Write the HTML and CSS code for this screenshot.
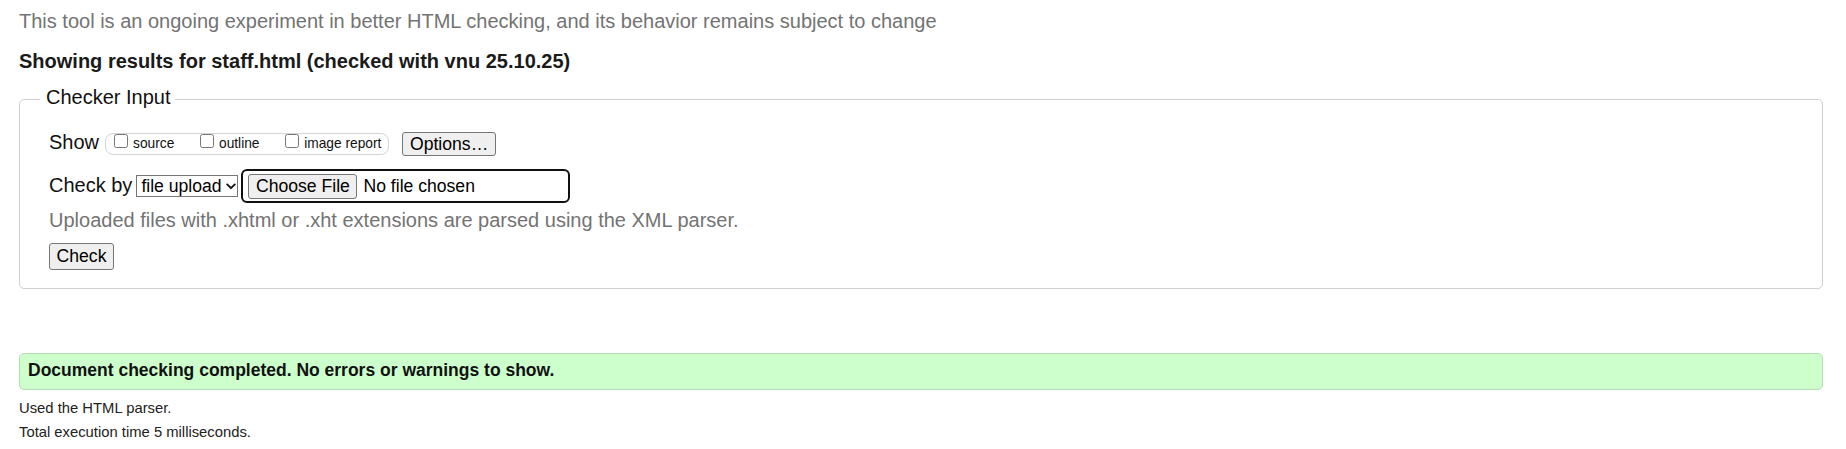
FILE: index.html
```html
<!DOCTYPE html>
<html lang="en">
<head>
<meta charset="utf-8">
<title>Nu Html Checker</title>
<link rel="stylesheet" href="styles.css">
</head>
<body>
<p class="intro">This tool is an ongoing experiment in better HTML checking, and its behavior remains subject to change</p>
<h2 class="results">Showing results for staff.html (checked with vnu 25.10.25)</h2>
<form class="checker">
  <fieldset class="input-box">
    <legend class="legend">Checker Input</legend>
    <div class="rows">
      <div class="row row-show">
        <span class="row-label">Show</span>
        <span class="show-options">
          <label class="opt"><input type="checkbox" class="cb"><span>source</span></label>
          <label class="opt"><input type="checkbox" class="cb"><span>outline</span></label>
          <label class="opt"><input type="checkbox" class="cb"><span>image report</span></label>
        </span>
        <button type="button" class="btn btn-options">Options…</button>
      </div>
      <div class="row row-checkby">
        <span class="row-label label-checkby">Check by</span>
        <span class="select" role="combobox" aria-label="Check by"><span class="select-text">file upload</span><svg class="chev" width="10" height="7" viewBox="0 0 10 7" aria-hidden="true"><path d="M1.2 1.4 L5 5.2 L8.8 1.4" fill="none" stroke="#111" stroke-width="1.9" stroke-linecap="round" stroke-linejoin="round"/></svg></span>
        <span class="file-wrap"><button type="button" class="btn btn-file">Choose File</button><span class="file-name">No file chosen</span></span>
      </div>
      <p class="hint">Uploaded files with .xhtml or .xht extensions are parsed using the XML parser.</p>
      <button type="button" class="btn btn-check">Check</button>
    </div>
  </fieldset>
</form>
<p class="success">Document checking completed. No errors or warnings to show.</p>
<p class="meta meta-first">Used the HTML parser.</p>
<p class="meta meta-second">Total execution time 5 milliseconds.</p>
</body>
</html>
```
FILE: styles.css
```css
* { box-sizing: border-box; }
html, body { margin: 0; background: #fff; }
body {
  font-family: "Liberation Sans", Arial, sans-serif;
  font-size: 17.6px;
  color: #000;
  padding: 0 23px 0 19px;
}
.intro {
  margin: 10px 0 0;
  font-size: 20px;
  line-height: normal;
  color: #737373;
}
.results {
  margin: 16.6px 0 0;
  font-size: 20px;
  line-height: normal;
  font-weight: bold;
  color: #1a1a1a;
}
.checker { margin: 13.9px 0 0; }
.input-box {
  margin: 0;
  padding: 0 20px 18.7px;
  border: 1px solid #cfcfcf;
  border-radius: 5px;
  min-width: 0;
}
.legend {
  padding: 0 4px 3px 6px;
  font-size: 20px;
  line-height: normal;
  color: #111;
}
.rows { margin-left: 9px; padding-top: 19.5px; }
.row { display: flex; align-items: flex-start; }
.row-label {
  font-size: 20px;
  line-height: normal;
  color: #111;
}
.row-show .row-label { margin-top: -1.4px; }
.show-options {
  display: flex;
  align-items: center;
  height: 22px;
  margin: 1px 0 0 6px;
  padding: 0 7px 0 8px;
  border: 1px solid #d4d4d4;
  border-radius: 8px;
  font-size: 13.75px;
  color: #111;
}
.opt { display: flex; align-items: center; gap: 5px; }
.opt + .opt { margin-left: 25.7px; }
.cb {
  width: 14px;
  height: 14px;
  margin: 0 0 6px 0;
}
.btn {
  font-family: "Liberation Sans", Arial, sans-serif;
  font-size: 17.6px;
  line-height: normal;
  color: #000;
  background: #efefef;
  border: 1px solid #767676;
  border-radius: 3px;
  padding: 1px 6.6px;
}
.btn-options { margin-left: 13px; height: 24.3px; }
.row-checkby { margin-top: 13px; }
.label-checkby { margin-top: 4.6px; }
.select {
  display: flex;
  align-items: center;
  justify-content: space-between;
  margin: 6px 0 0 4px;
  width: 102px;
  height: 22px;
  font-size: 17.6px;
  color: #000;
  background: #fff;
  border: 1px solid #767676;
  padding: 0 1.5px 0 4px;
}
.chev { display: block; }
.file-wrap {
  display: flex;
  align-items: center;
  margin-left: 3px;
  width: 329px;
  height: 34px;
  border: 2px solid #101010;
  border-radius: 6px;
  padding-left: 5px;
}
.btn-file { height: 25px; }
.file-name { margin-left: 6px; color: #000; }
.hint {
  margin: 6.1px 0 0;
  font-size: 20px;
  line-height: normal;
  color: #737373;
}
.btn-check { margin-top: 10.9px; height: 26.3px; }
.success {
  margin: 63.5px 0 0;
  padding: 6.3px 8px 7.5px;
  background: #ccffcc;
  border: 1px solid #b3dcb3;
  border-radius: 5px;
  font-weight: bold;
  font-size: 17.5px;
  line-height: normal;
  color: #111;
}
.meta {
  font-size: 14.8px;
  line-height: normal;
  color: #222;
}
.meta-first { margin: 10.6px 0 0; }
.meta-second { margin: 7.5px 0 0; }
```
